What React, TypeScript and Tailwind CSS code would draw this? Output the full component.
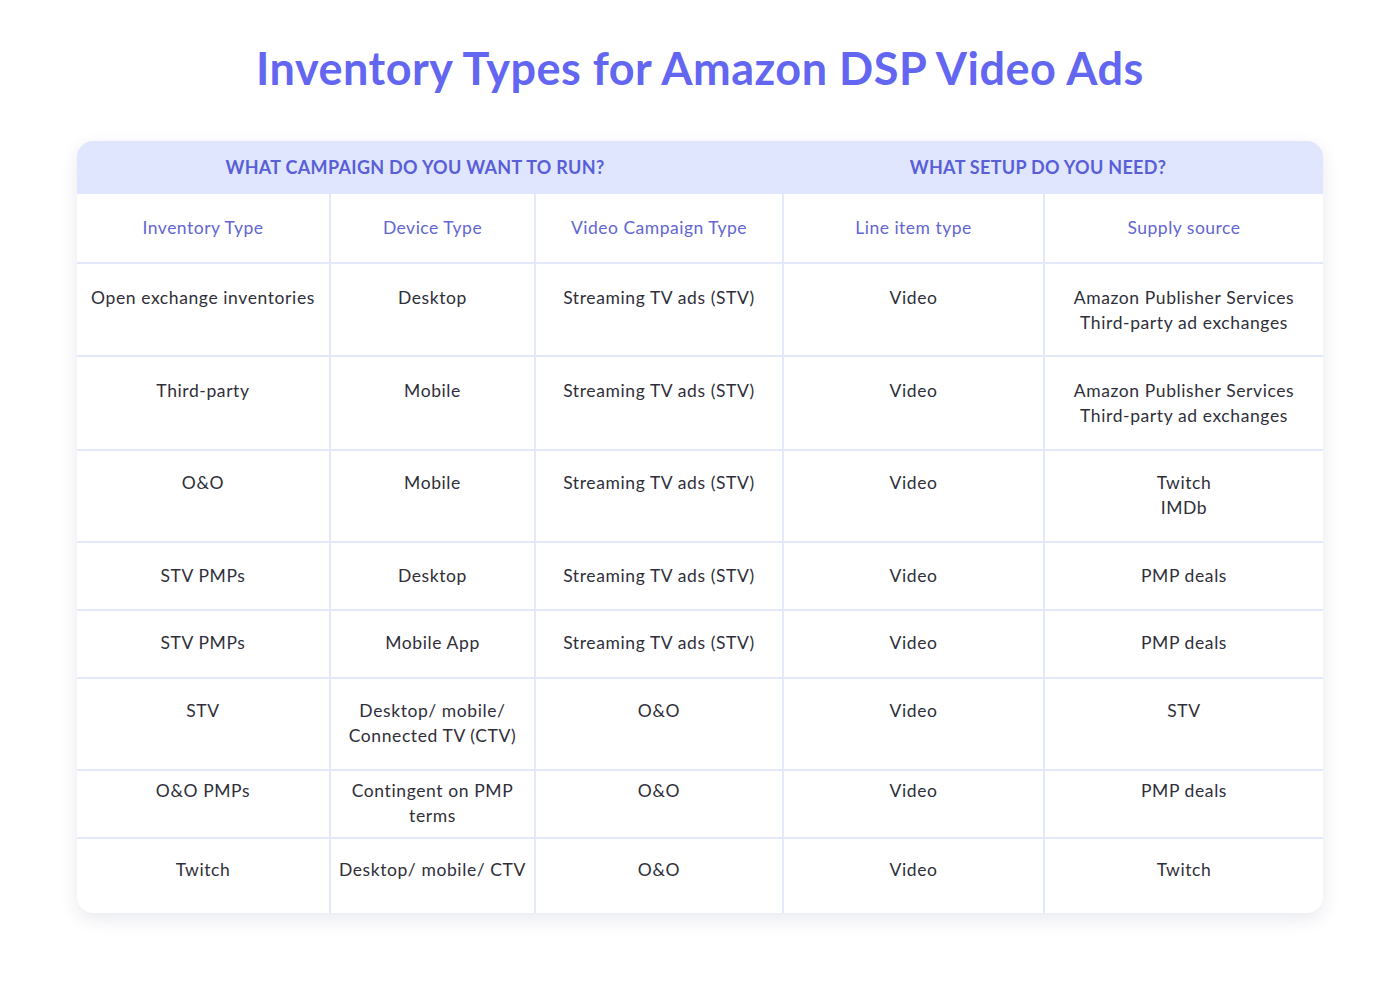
import React from "react";

type Row = { h: number; pt: number; cells: string[][] };

const rows: Row[] = [
  { h: 93, pt: 21, cells: [["Open exchange inventories"], ["Desktop"], ["Streaming TV ads (STV)"], ["Video"], ["Amazon Publisher Services", "Third-party ad exchanges"]] },
  { h: 94, pt: 21, cells: [["Third-party"], ["Mobile"], ["Streaming TV ads (STV)"], ["Video"], ["Amazon Publisher Services", "Third-party ad exchanges"]] },
  { h: 92, pt: 19, cells: [["O&O"], ["Mobile"], ["Streaming TV ads (STV)"], ["Video"], ["Twitch", "IMDb"]] },
  { h: 68, pt: 20, cells: [["STV PMPs"], ["Desktop"], ["Streaming TV ads (STV)"], ["Video"], ["PMP deals"]] },
  { h: 68, pt: 19, cells: [["STV PMPs"], ["Mobile App"], ["Streaming TV ads (STV)"], ["Video"], ["PMP deals"]] },
  { h: 92, pt: 19, cells: [["STV"], ["Desktop/ mobile/", "Connected TV (CTV)"], ["O&O"], ["Video"], ["STV"]] },
  { h: 68, pt: 7, cells: [["O&O PMPs"], ["Contingent on PMP", "terms"], ["O&O"], ["Video"], ["PMP deals"]] },
  { h: 76, pt: 18, cells: [["Twitch"], ["Desktop/ mobile/ CTV"], ["O&O"], ["Video"], ["Twitch"]] },
];

const heads = ["Inventory Type", "Device Type", "Video Campaign Type", "Line item type", "Supply source"];

export default function App() {
  return (
    <div className="w-[1400px] h-[985px] bg-white" style={{ fontFamily: "Lato, 'Noto Sans', sans-serif" }}>
      <h1 className="pt-[40px] h-[141px] text-center text-[45px] leading-[56px] font-bold text-[#6366f1] tracking-[0.5px]">
        Inventory Types for Amazon DSP Video Ads
      </h1>
      <div className="mx-[77px] w-[1246px] rounded-[16px] bg-white shadow-[0_6px_18px_rgba(30,40,90,0.10)] overflow-hidden">
        <div className="flex h-[53px] bg-[#dfe6fd] items-center text-[18px] font-bold text-[#5a5fd8] tracking-[0.3px]">
          <div className="w-[676px] text-center">WHAT CAMPAIGN DO YOU WANT TO RUN?</div>
          <div className="w-[570px] text-center">WHAT SETUP DO YOU NEED?</div>
        </div>
        <div className="grid grid-cols-[254px_205px_248px_261px_278px] h-[68px] text-[17.5px] tracking-[0.5px] text-[#6366d1]">
          {heads.map((h, i) => (
            <div key={h} className={`flex items-center justify-center ${i < 4 ? "border-r-2 border-[#e3e8fb]" : ""}`}>{h}</div>
          ))}
        </div>
        {rows.map((r, ri) => (
          <div key={ri} className="grid grid-cols-[254px_205px_248px_261px_278px] border-t-2 border-[#e3e8fb] text-[17.5px] tracking-[0.6px] leading-[25px] text-[#2f2f3a]" style={{ height: r.h }}>
            {r.cells.map((c, ci) => (
              <div key={ci} className={`text-center ${ci < 4 ? "border-r-2 border-[#e3e8fb]" : ""}`} style={{ paddingTop: r.pt }}>
                {c.map((l, li) => (
                  <div key={li}>{l}</div>
                ))}
              </div>
            ))}
          </div>
        ))}
      </div>
    </div>
  );
}
